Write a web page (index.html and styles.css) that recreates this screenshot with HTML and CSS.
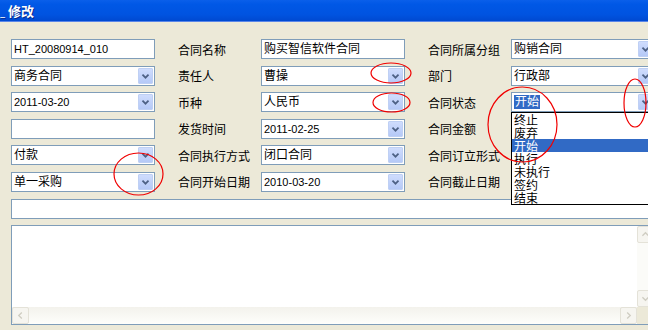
FILE: index.html
```html
<!DOCTYPE html>
<html>
<head>
<meta charset="utf-8">
<link rel="stylesheet" href="styles.css">
</head>
<body>
<div class="window">
  <div class="titlebar"><span class="frag">_</span><span class="title">修改</span></div>
  <div class="form">
    <div class="field"><span class="val lat">HT_20080914_010</span></div>
    <div class="label">合同名称</div>
    <div class="field"><span class="val">购买智信软件合同</span></div>
    <div class="label">合同所属分组</div>
    <div class="field select"><span class="val">购销合同</span><span class="btn"><svg viewBox="0 0 15 16"><path d="M4 6.5 L7.5 10 L11 6.5"/></svg></span></div>

    <div class="field select"><span class="val">商务合同</span><span class="btn"><svg viewBox="0 0 15 16"><path d="M4 6.5 L7.5 10 L11 6.5"/></svg></span></div>
    <div class="label">责任人</div>
    <div class="field select"><span class="val">曹操</span><span class="btn"><svg viewBox="0 0 15 16"><path d="M4 6.5 L7.5 10 L11 6.5"/></svg></span></div>
    <div class="label">部门</div>
    <div class="field select"><span class="val">行政部</span><span class="btn"><svg viewBox="0 0 15 16"><path d="M4 6.5 L7.5 10 L11 6.5"/></svg></span></div>

    <div class="field select"><span class="val lat">2011-03-20</span><span class="btn"><svg viewBox="0 0 15 16"><path d="M4 6.5 L7.5 10 L11 6.5"/></svg></span></div>
    <div class="label">币种</div>
    <div class="field select"><span class="val">人民币</span><span class="btn"><svg viewBox="0 0 15 16"><path d="M4 6.5 L7.5 10 L11 6.5"/></svg></span></div>
    <div class="label">合同状态</div>
    <div class="field select"><span class="val"><span class="sel">开始</span></span><span class="btn"><svg viewBox="0 0 15 16"><path d="M4 6.5 L7.5 10 L11 6.5"/></svg></span></div>

    <div class="field"></div>
    <div class="label">发货时间</div>
    <div class="field select"><span class="val lat">2011-02-25</span><span class="btn"><svg viewBox="0 0 15 16"><path d="M4 6.5 L7.5 10 L11 6.5"/></svg></span></div>
    <div class="label">合同金额</div>
    <div class="field"></div>

    <div class="field select"><span class="val">付款</span><span class="btn"><svg viewBox="0 0 15 16"><path d="M4 6.5 L7.5 10 L11 6.5"/></svg></span></div>
    <div class="label">合同执行方式</div>
    <div class="field select"><span class="val">闭口合同</span><span class="btn"><svg viewBox="0 0 15 16"><path d="M4 6.5 L7.5 10 L11 6.5"/></svg></span></div>
    <div class="label">合同订立形式</div>
    <div class="field select"><span class="val"></span><span class="btn"><svg viewBox="0 0 15 16"><path d="M4 6.5 L7.5 10 L11 6.5"/></svg></span></div>

    <div class="field select"><span class="val">单一采购</span><span class="btn"><svg viewBox="0 0 15 16"><path d="M4 6.5 L7.5 10 L11 6.5"/></svg></span></div>
    <div class="label">合同开始日期</div>
    <div class="field select"><span class="val lat">2010-03-20</span><span class="btn"><svg viewBox="0 0 15 16"><path d="M4 6.5 L7.5 10 L11 6.5"/></svg></span></div>
    <div class="label">合同截止日期</div>
    <div class="field select"><span class="val"></span><span class="btn"><svg viewBox="0 0 15 16"><path d="M4 6.5 L7.5 10 L11 6.5"/></svg></span></div>

    <div class="field wide"></div>

    <div class="memo">
      <div class="memo-body"></div>
      <div class="vscroll">
        <span class="sbtn"><svg viewBox="0 0 17 17"><path d="M5 10 L8.5 6.5 L12 10"/></svg></span>
        <span class="strack"></span>
        <span class="sbtn"><svg viewBox="0 0 17 17"><path d="M5 7 L8.5 10.5 L12 7"/></svg></span>
      </div>
      <div class="hscroll">
        <span class="sbtn"><svg viewBox="0 0 17 17"><path d="M10 5 L6.5 8.5 L10 12"/></svg></span>
        <span class="strack"></span>
        <span class="sbtn"><svg viewBox="0 0 17 17"><path d="M7 5 L10.5 8.5 L7 12"/></svg></span>
      </div>
      <div class="corner"></div>
    </div>
  </div>

  <ul class="dropdown">
    <li>终止</li>
    <li>废弃</li>
    <li class="hl">开始</li>
    <li>执行</li>
    <li>未执行</li>
    <li>签约</li>
    <li>结束</li>
  </ul>

  <svg class="marks" width="648" height="330" viewBox="0 0 648 330">
    <ellipse cx="138.5" cy="174" rx="24.5" ry="21"/>
    <ellipse cx="391" cy="73" rx="20" ry="10"/>
    <ellipse cx="391.5" cy="102.5" rx="18.5" ry="9.5"/>
    <ellipse cx="522.5" cy="124.5" rx="34.5" ry="37.5"/>
    <ellipse cx="635" cy="103" rx="11" ry="24"/>
  </svg>
</div>
</body>
</html>
```
FILE: styles.css
```css
html, body {
  margin: 0;
  padding: 0;
  width: 648px;
  height: 330px;
  overflow: hidden;
  background: #ECE9D8;
}

.window {
  position: relative;
  width: 648px;
  height: 330px;
  overflow: hidden;
  font-family: "Liberation Sans", "Noto Sans CJK SC", sans-serif;
  font-size: 12px;
  color: #000;
}

.titlebar {
  height: 21px;
  border-bottom: 1px solid #5A86E8;
  background: linear-gradient(#0A5FEA 0%, #0058E6 20%, #0053E0 70%, #0049D0 100%);
  display: flex;
  align-items: center;
  color: #fff;
  font-family: "Noto Sans CJK SC", sans-serif;
  font-weight: bold;
  font-size: 13px;
  text-shadow: 1px 1px 0 #0A2A8A;
}

.frag {
  width: 8px;
  font-size: 9px;
  padding-top: 4px;
}

.title {
  letter-spacing: 0;
}

.form {
  display: grid;
  grid-template-columns: 144px 106px 144px 106px 144px;
  grid-template-rows: repeat(7, 20px) 100px;
  row-gap: 6.6px;
  padding: 17px 0 0 11px;
}

.field {
  box-sizing: border-box;
  height: 20px;
  border: 1px solid #7F9DB9;
  background: #fff;
  display: flex;
  align-items: center;
  overflow: hidden;
}

.field.wide {
  grid-column: 1 / -1;
}

.val {
  flex: 1;
  padding-left: 2px;
  white-space: nowrap;
  line-height: 14px;
}

.val.lat {
  font-size: 11px;
}

.sel {
  background: #316AC5;
  color: #fff;
  padding: 0 1px;
}

.btn {
  box-sizing: border-box;
  width: 15px;
  height: 16px;
  margin-right: 1px;
  background: linear-gradient(#CFDCFD, #B5C9F7);
  border: 1px solid #BFD0F4;
  border-radius: 1px;
  display: flex;
}

.btn svg {
  width: 13px;
  height: 14px;
}

.btn path {
  fill: none;
  stroke: #4D6185;
  stroke-width: 2;
}

.label {
  padding-left: 23px;
  display: flex;
  align-items: center;
  font-family: "Noto Sans CJK SC", sans-serif;
  white-space: nowrap;
}

.memo {
  grid-column: 1 / -1;
  box-sizing: border-box;
  height: 100px;
  border: 1px solid #7F9DB9;
  background: #fff;
  display: grid;
  grid-template-columns: 1fr 17px;
  grid-template-rows: 1fr 17px;
}

.vscroll {
  display: flex;
  flex-direction: column;
  background: #FBFBF8;
}

.hscroll {
  display: flex;
  background: linear-gradient(#F3F2EC, #FEFEFB);
}

.strack {
  flex: 1;
}

.sbtn {
  box-sizing: border-box;
  width: 17px;
  height: 17px;
  background: #F6F5F0;
  border: 1px solid #E4E2D8;
  border-radius: 2px;
  display: flex;
}

.sbtn svg {
  width: 15px;
  height: 15px;
}

.sbtn path {
  fill: none;
  stroke: #CFCDC2;
  stroke-width: 1.5;
}

.corner {
  background: #ECE9D8;
}

.dropdown {
  position: absolute;
  left: 511px;
  top: 112px;
  width: 142px;
  height: 93px;
  box-sizing: border-box;
  margin: 0;
  padding: 0;
  list-style: none;
  border: 1px solid #000;
  background: #fff;
  font-family: "Noto Sans CJK SC", sans-serif;
}

.dropdown li {
  height: 13px;
  line-height: 13px;
  padding-left: 2px;
}

.dropdown li.hl {
  background: #316AC5;
  color: #fff;
}

.marks {
  position: absolute;
  left: 0;
  top: 0;
  pointer-events: none;
}

.marks ellipse {
  fill: none;
  stroke: #F00000;
  stroke-width: 1.2;
}
```
